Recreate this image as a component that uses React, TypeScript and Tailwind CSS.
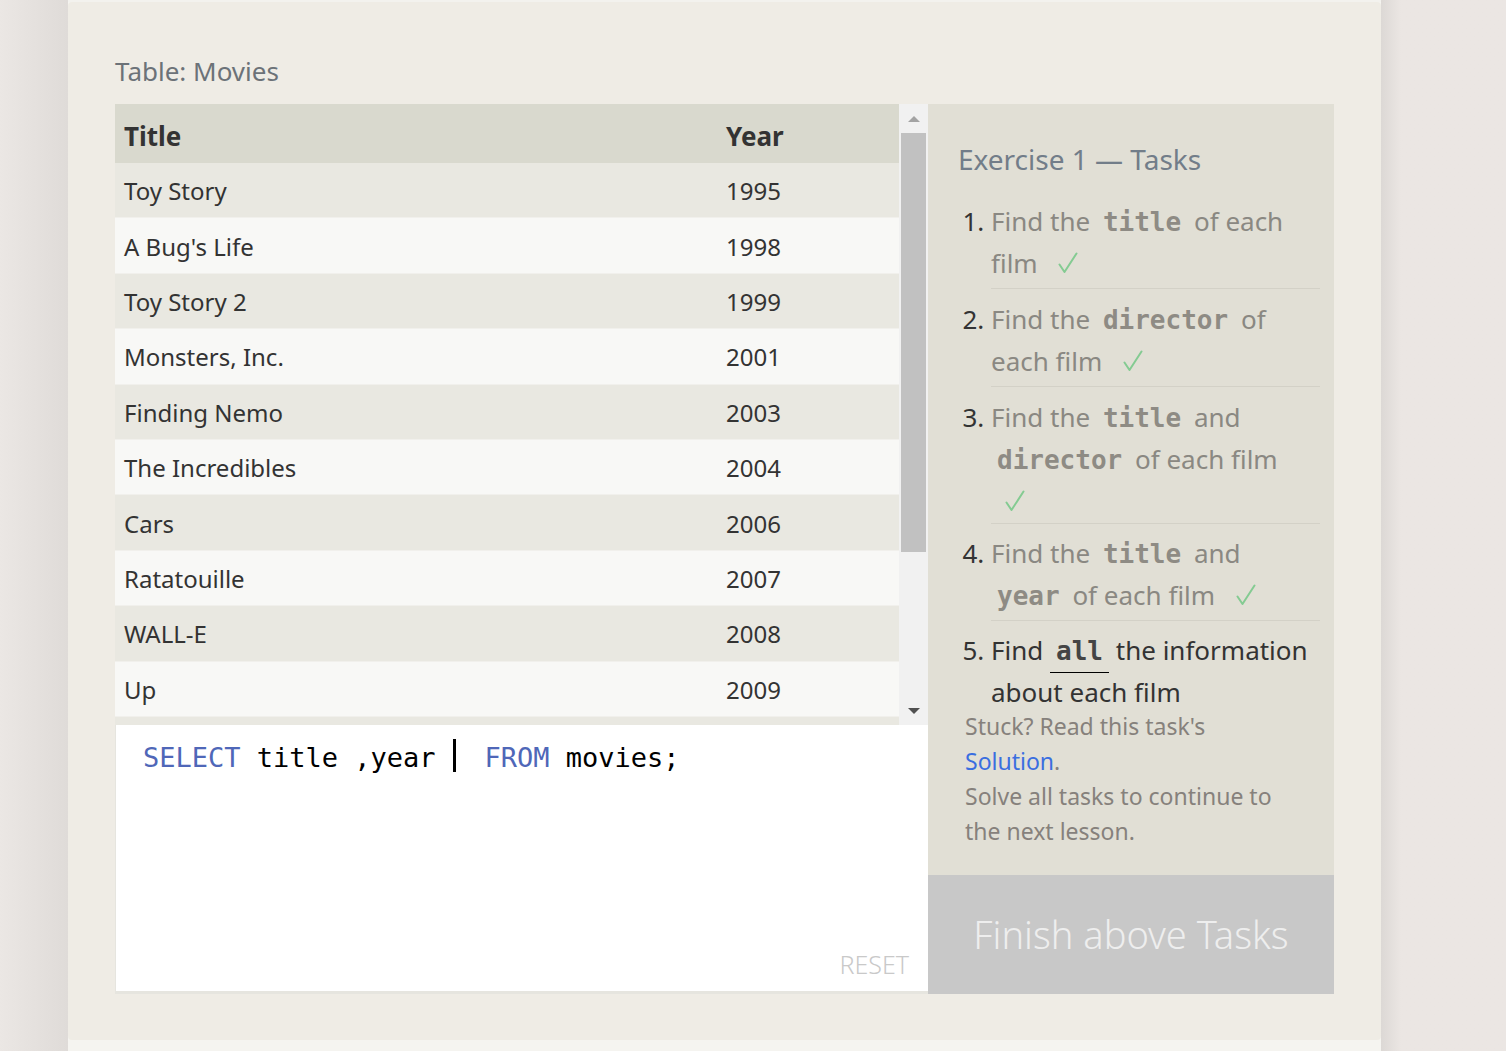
import React from 'react';

const movies: [string, number][] = [
  ['Toy Story', 1995],
  ["A Bug's Life", 1998],
  ['Toy Story 2', 1999],
  ['Monsters, Inc.', 2001],
  ['Finding Nemo', 2003],
  ['The Incredibles', 2004],
  ['Cars', 2006],
  ['Ratatouille', 2007],
  ['WALL-E', 2008],
  ['Up', 2009],
  ['Toy Story 3', 2010],
  ['Cars 2', 2011],
];

const sans = "font-['Noto_Sans','Open_Sans',sans-serif]";
const mono = "font-['DejaVu_Sans_Mono',monospace]";

const Code: React.FC<{ children: React.ReactNode; dark?: boolean }> = ({ children, dark }) => (
  <code
    className={`${mono} font-bold px-[6px] text-[26px] leading-none ${
      dark ? 'text-[#444] border-b border-black pb-[6px]' : 'text-[#8e8b84]'
    }`}
  >
    {children}
  </code>
);

const Check = () => (
  <svg
    width="20"
    height="21"
    viewBox="0 0 20 21"
    className="inline-block ml-[14px] align-baseline"
    fill="none"
    stroke="#84cb92"
    strokeWidth="2"
    strokeLinecap="round"
    strokeLinejoin="round"
  >
    <path d="M1.5 12.5 L6.5 20 L18.5 1.5" />
  </svg>
);

const ScrollBar = () => (
  <div className="w-[29px] h-full bg-[#f1f1f1] flex flex-col">
    <div className="h-[29px] flex items-center justify-center">
      <div className="w-0 h-0 border-l-[6px] border-r-[6px] border-b-[6px] border-l-transparent border-r-transparent border-b-[#a3a3a3]" />
    </div>
    <div className="mx-[2px] h-[419px] bg-[#c1c1c1]" />
    <div className="flex-1" />
    <div className="h-[29px] flex items-center justify-center">
      <div className="w-0 h-0 border-l-[6px] border-r-[6px] border-t-[6px] border-l-transparent border-r-transparent border-t-[#505050]" />
    </div>
  </div>
);

export default function App() {
  return (
    <div className={`${sans} w-full h-[1051px] flex bg-[#ebe6e3] overflow-hidden`}>
      {/* left gutter */}
      <div className="w-[68px] shrink-0 bg-gradient-to-r from-[#ebe7e4] to-[#dfdbd8]" />

      {/* main column */}
      <div className="w-[1313px] shrink-0 flex flex-col bg-[#f5f4f0]">
        <div className="h-[2px] bg-[#f3f2ee]" />
        <div className="flex-1 bg-[#efece5] rounded-[4px] px-[47px] pt-[51px]">
          <div className="text-[26px] leading-[36px] text-[#6c7278] mb-[15px]">Table: Movies</div>

          <div className="flex">
            {/* left: table + editor */}
            <div className="w-[813px] flex flex-col">
              <div className="h-[621px] flex">
                <div className="flex-1 overflow-hidden">
                  <div className="h-[59px] bg-[#d9d9ce] flex items-center pt-[5px] text-[26px] font-bold text-[#333]">
                    <div className="w-[602px] pl-[9px]">Title</div>
                    <div className="pl-[9px]">Year</div>
                  </div>
                  {movies.map(([title, year], i) => (
                    <div
                      key={title}
                      className={`h-[55.4px] flex items-center pt-[2px] text-[24px] text-[#333] border-b border-[#f1f0ec] ${
                        i % 2 === 0 ? 'bg-[#e9e8e1]' : 'bg-[#f8f8f6]'
                      }`}
                    >
                      <div className="w-[602px] pl-[9px]">{title}</div>
                      <div className="pl-[9px]">{year}</div>
                    </div>
                  ))}
                </div>
                <ScrollBar />
              </div>

              <div className="h-[269px] bg-white border-l border-b-[3px] border-[#e6e5df] flex flex-col">
                <div className={`${mono} text-[27px] leading-[34px] pl-[27px] pt-[16px] text-black whitespace-pre`}>
                  <span className="text-[#4f67b8]">SELECT</span>
                  {' title ,year '}
                  <span className="relative inline-block w-0">
                    <span className="absolute left-[1px] top-[-28px] w-[3px] h-[33px] bg-black" />
                  </span>
                  {'  '}
                  <span className="text-[#4f67b8]">FROM</span>
                  {' movies;'}
                </div>
                <div className="flex-1" />
                <div className="text-right pr-[19px] pb-[12px] text-[25px] font-light text-[#c9c9c9] leading-[30px]">RESET</div>
              </div>
            </div>

            {/* right: tasks */}
            <div className="flex-1 flex flex-col">
              <div className="flex-1 bg-[#e1dfd5] pl-[30px] pr-[14px] pt-[36px]">
                <div className="text-[28px] leading-[38px] text-[#727d89] mb-[22px]">Exercise 1 — Tasks</div>
                <ol className="list-decimal pl-[33px] text-[26px] leading-[42px] text-[#8a8882] marker:text-[#333]">
                  <li className="border-b border-[#d3d1c7] pb-[4px]">
                    Find the <Code>title</Code> of each film <Check />
                  </li>
                  <li className="border-b border-[#d3d1c7] pt-[9px] pb-[4px]">
                    Find the <Code>director</Code> of each film <Check />
                  </li>
                  <li className="border-b border-[#d3d1c7] pt-[9px] pb-[1px] pr-[20px]">
                    Find the <Code>title</Code> and <Code>director</Code> of each film <Check />
                  </li>
                  <li className="border-b border-[#d3d1c7] pt-[8px] pb-[4px]">
                    Find the <Code>title</Code> and <Code>year</Code> of each film <Check />
                  </li>
                  <li className="pt-[8px] text-[#333]">
                    Find <Code dark>all</Code> the information about each film
                  </li>
                </ol>
                <div className="text-[23px] leading-[35px] text-[#86817c] pl-[7px] -mt-[4px] w-[340px]">
                  <div>
                    Stuck? Read this task's <br />
                    <span className="text-[#3a6ee0]">Solution</span>.
                  </div>
                  <div>Solve all tasks to continue to the next lesson.</div>
                </div>
              </div>
              <div className="h-[119px] bg-[#c8c8c8] flex items-center justify-center text-[38px] font-light text-[#eeeeee]">
                Finish above Tasks
              </div>
            </div>
          </div>
        </div>
        <div className="h-[11px]" />
      </div>

      {/* right gutter */}
      <div className="flex-1 bg-gradient-to-r from-[#dcd8d5] to-[#ebe6e3] to-[20px]" />
    </div>
  );
}
